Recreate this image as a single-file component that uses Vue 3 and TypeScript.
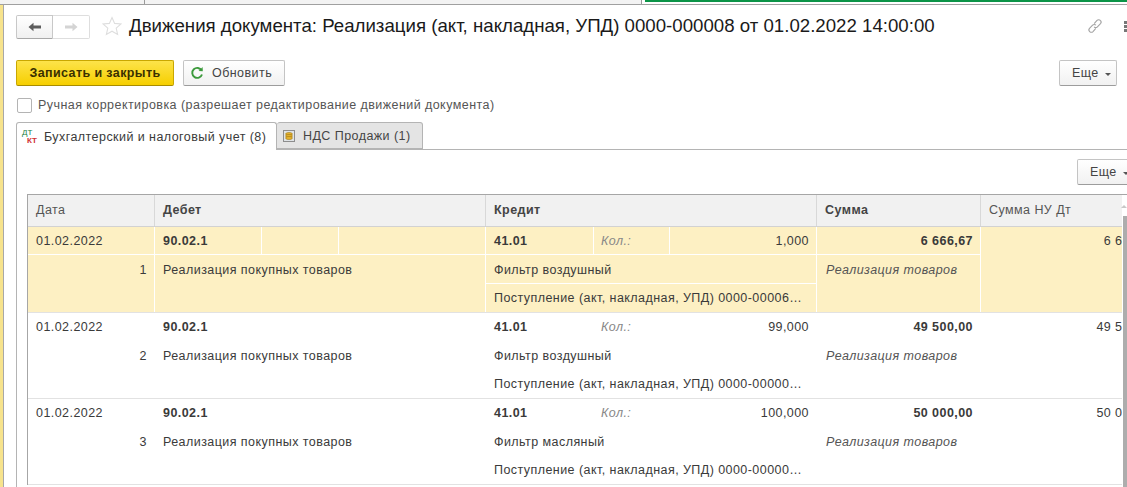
<script setup lang="ts">
interface Row { n: number; qty: string; sum: string; nu: string; item: string; doc: string; active?: boolean }
const rows: Row[] = [
  { n: 1, qty: '1,000', sum: '6 666,67', nu: '6 666,67', item: 'Фильтр воздушный', doc: 'Поступление (акт, накладная, УПД) 0000-00006…', active: true },
  { n: 2, qty: '99,000', sum: '49 500,00', nu: '49 500,00', item: 'Фильтр воздушный', doc: 'Поступление (акт, накладная, УПД) 0000-00000…' },
  { n: 3, qty: '100,000', sum: '50 000,00', nu: '50 000,00', item: 'Фильтр масляный', doc: 'Поступление (акт, накладная, УПД) 0000-00000…' },
]
</script>

<template>
  <div class="page">
    <div class="topstrip">
      <div class="tab-a"></div>
      <div class="tab-b"></div>
      <div class="tab-c"></div>
    </div>
    <div class="shell">
      <div class="side"></div>
      <main class="main">
        <header class="titlebar">
          <div class="nav">
            <button class="nav-btn back">
              <svg width="14" height="10" viewBox="0 0 14 10"><path d="M0.5 5 5.5 0.8V3.5H13V6.5H5.5V9.2Z" fill="#5c5c5c" /></svg>
            </button>
            <button class="nav-btn fwd">
              <svg width="14" height="10" viewBox="0 0 14 10"><path d="M13.5 5 8.5 0.8V3.5H1V6.5H8.5V9.2Z" fill="#d4d4d4" /></svg>
            </button>
          </div>
          <svg class="star" width="20" height="20" viewBox="0 0 20 20"><path d="M10 1.5 12.6 7.4 19 8 14.2 12.2 15.6 18.5 10 15.2 4.4 18.5 5.8 12.2 1 8 7.4 7.4Z" fill="none" stroke="#dedede" stroke-width="1.1" /></svg>
          <h1 class="title">Движения документа: Реализация (акт, накладная, УПД) 0000-000008 от 01.02.2022 14:00:00</h1>
          <svg class="link" width="16" height="16" viewBox="0 0 16 16" fill="none" stroke="#a4a4a4" stroke-width="1.1"><path d="M7.2 5.6 10 2.4a2.3 2.3 0 0 1 3.3 0 2.3 2.3 0 0 1 .2 3.2L10.4 8.8a2.3 2.3 0 0 1-3.3 0" /><path d="M8.8 10.4 6 13.6a2.3 2.3 0 0 1-3.3 0 2.3 2.3 0 0 1-.2-3.2L5.6 7.2a2.3 2.3 0 0 1 3.3 0" /></svg>
          <div class="dots"><i></i><i></i><i></i></div>
        </header>

        <div class="toolbar">
          <button class="btn primary">Записать и закрыть</button>
          <button class="btn refresh">
            <svg width="14" height="14" viewBox="0 0 14 14" fill="none"><path d="M11.6 4.4A5 5 0 1 0 12 8.5" stroke="#3c9a3c" stroke-width="1.9" /><path d="M8.6 4.9 12.8 5.3 12.6 1Z" fill="#3c9a3c" /></svg>
            Обновить
          </button>
          <button class="btn more top-more">Еще <span class="caret"></span></button>
        </div>

        <label class="check"><span class="box"></span>Ручная корректировка (разрешает редактирование движений документа)</label>

        <div class="tabs">
          <div class="tab current">
            <span class="dtkt"><b class="dt">ДТ</b><b class="kt">КТ</b></span>
            Бухгалтерский и налоговый учет (8)
          </div>
          <div class="tab other">
            <span class="coins"><svg width="12" height="12" viewBox="0 0 12 12"><rect x="0.5" y="0.5" width="11" height="11" fill="#dfe3e6" stroke="#8d8d8d" /><ellipse cx="6" cy="4" rx="3.4" ry="1.5" fill="#e8b52e" stroke="#9a7414" stroke-width=".6" /><ellipse cx="6" cy="6" rx="3.4" ry="1.5" fill="#e8b52e" stroke="#9a7414" stroke-width=".6" /><ellipse cx="6" cy="8" rx="3.4" ry="1.5" fill="#e8b52e" stroke="#9a7414" stroke-width=".6" /></svg></span>
            НДС Продажи (1)
          </div>
        </div>

        <section class="panel">
          <div class="panel-bar">
            <button class="btn more table-more">Еще <span class="caret"></span></button>
          </div>
          <div class="table">
            <div class="clip">
              <div class="thead">
                <div class="th">Дата</div>
                <div class="th strong">Дебет</div>
                <div class="th strong">Кредит</div>
                <div class="th strong">Сумма</div>
                <div class="th">Сумма НУ Дт</div>
              </div>
              <div v-for="r in rows" :key="r.n" class="row" :class="{ active: r.active }">
                <div class="col c-date">
                  <div class="line">01.02.2022</div>
                  <div class="line num">{{ r.n }}</div>
                </div>
                <div class="col c-deb">
                  <div class="line split deb-split">
                    <span class="strong">90.02.1</span><span></span><span></span>
                  </div>
                  <div class="line">Реализация покупных товаров</div>
                </div>
                <div class="col c-cred">
                  <div class="line split cred-split">
                    <span class="strong">41.01</span><span class="kol">Кол.:</span><span class="right">{{ r.qty }}</span>
                  </div>
                  <div class="line ruled">{{ r.item }}</div>
                  <div class="line ruled">{{ r.doc }}</div>
                </div>
                <div class="col c-sum">
                  <div class="line right strong">{{ r.sum }}</div>
                  <div class="line kol-sum">Реализация товаров</div>
                </div>
                <div class="col c-nu">
                  <div class="line right">{{ r.nu }}</div>
                </div>
              </div>
            </div>
          </div>
          <div class="scroll-up"></div>
          <div class="scroll"></div>
        </section>
      </main>
    </div>
  </div>
</template>

<style>
html, body { margin: 0; background: #fff; }
</style>

<style scoped>
.page {
  width: 1127px;
  height: 487px;
  overflow: hidden;
  background: #fff;
  color: #3a3a3a;
  font-family: "Liberation Sans", Arial, sans-serif;
  font-size: 12.5px;
  letter-spacing: 0.44px;
}
button { font: inherit; letter-spacing: inherit; color: inherit; }

.topstrip {
  height: 4px;
  display: flex;
  border-bottom: 1px solid #a0a0a0;
}
.tab-a { width: 144px; background: #f3f3f3; border-right: 1px solid #9a9a9a; }
.tab-b { width: 496px; background: #f3f3f3; border-right: 1px solid #9a9a9a; }
.tab-c { flex: 1; margin-left: 3px; height: 2px; background: #0b9447; }

.shell { display: flex; height: 482px; }
.side { width: 3px; background: #f7e38c; border-right: 1px solid #a8a8a8; }
.main { flex: 1; min-width: 0; padding-left: 11px; display: flex; flex-direction: column; }

.titlebar { display: flex; align-items: center; padding-top: 3px; box-sizing: border-box; height: 39px; }
.nav { display: flex; width: 74px; height: 24px; margin-left: 1px; margin-top: 1px; }
.nav-btn {
  width: 37px; padding: 0; display: flex; align-items: center; justify-content: center;
  background: #fff; border: 1px solid #dedede;
}
.nav-btn.back { background: linear-gradient(#fff, #f0f0f0); border-color: #c8c8c8; border-bottom-color: #a8a8a8; border-radius: 2px 0 0 2px; }
.nav-btn.fwd { border-left: 0; border-radius: 0 2px 2px 0; }
.star { margin-left: 12px; flex: none; }
.title {
  margin: 0 0 0 7px; font-size: 18.67px; font-weight: 400; color: #1a1a1a; letter-spacing: 0; white-space: nowrap;
}
.link { margin-left: auto; margin-right: 21px; flex: none; }
.dots { display: flex; flex-direction: column; gap: 1px; flex: none; width: 3px; }
.dots i { width: 3px; height: 3px; background: #777; display: block; }

.toolbar { display: flex; align-items: center; height: 26px; margin-top: 16px; position: relative; padding-left: 1px; }
.btn {
  height: 26px; box-sizing: border-box; padding: 0; background: linear-gradient(#fff, #f1f1f1);
  border: 1px solid #c4c4c4; border-bottom-color: #9c9c9c; border-radius: 2px;
  display: flex; align-items: center; white-space: nowrap; color: #444;
}
.primary {
  width: 158px; justify-content: center; background: linear-gradient(#fde34a, #f6cf00); border-color: #c9a700; border-bottom-color: #a88c00; color: #3a3000; font-weight: 700; letter-spacing: 0.4px;
}
.refresh { width: 102px; margin-left: 9px; gap: 8px; padding-left: 6px; }
.more { width: 58px; gap: 6px; padding-left: 12px; }
.top-more { margin-left: auto; margin-right: 10px; }
.caret { width: 0; height: 0; border: 3px solid transparent; border-top-color: #555; border-bottom: 0; margin-top: 2px; }

.check { display: flex; align-items: center; height: 16px; margin-top: 11px; padding-left: 2px; color: #555; white-space: nowrap; }
.box { width: 13px; height: 13px; border: 1px solid #b4b4b4; border-radius: 2px; margin-right: 6px; background: #fff; }

.tabs { display: flex; margin-top: 9px; height: 27px; position: relative; z-index: 1; padding-left: 1px; }
.tab { box-sizing: border-box; display: flex; align-items: center; white-space: nowrap; border: 1px solid #b4b4b4; border-radius: 3px 3px 0 0; }
.tab.current { width: 261px; height: 28px; background: #fff; border-bottom: 0; padding-left: 5px; color: #3a3a3a; }
.tab.other { width: 146px; height: 27px; background: #e4e4e4; border-left: 0; padding-left: 6px; color: #444; }
.dtkt { width: 17px; height: 16px; margin-right: 5px; position: relative; display: inline-block; font-size: 8px; letter-spacing: 0; }
.dt { position: absolute; left: 0; top: -1px; color: #178040; font-weight: 400; }
.kt { position: absolute; left: 5px; top: 7px; color: #cf3030; font-weight: 700; }
.coins { margin-right: 8px; display: flex; }

.panel { position: relative; flex: 1; margin-left: 1px; border: 1px solid #b4b4b4; border-right: 0; border-bottom: 0; padding-left: 10px; min-height: 0; overflow: hidden; }
.panel-bar { height: 44px; display: flex; align-items: flex-start; justify-content: flex-end; padding-top: 9px; box-sizing: border-box; }
.table-more { width: 58px; height: 26px; margin-right: -8px; flex: none; }

.table { border-top: 1px solid #a6a6a6; margin-right: 0; }
.clip { width: 1094px; overflow: hidden; border-left: 1px solid #a6a6a6; }
.thead, .row { display: grid; grid-template-columns: 127px 331px 331px 164px 183px; width: 1136px; }
.thead { height: 32px; box-sizing: border-box; background: #f1f1f1; border-bottom: 1px solid #d2d2d2; }
.th { display: flex; align-items: center; padding: 0 0 2px 8px; border-right: 1px solid #d8d8d8; color: #555; white-space: nowrap; }
.row { height: 86px; box-sizing: border-box; border-bottom: 1px solid #e2e2e2; }
.row.active { background: #fdf0c3; }
.col { min-width: 0; border-right: 1px solid transparent; }
.row.active .col { border-right-color: #fff; }
.line { height: 29px; box-sizing: border-box; padding: 0 7px 0 8px; display: flex; align-items: center; white-space: nowrap; overflow: hidden; }
.line:first-child { height: 28px; }
.line:nth-child(3) { height: 28px; }
.row.active .line { box-shadow: inset 0 -1px 0 #fff; }
.row.active .col .line:last-child { box-shadow: none; }
.num { justify-content: flex-end; }
.split { padding: 0; display: grid; }
.split > span { height: 100%; display: flex; align-items: center; padding: 0 8px; box-sizing: border-box; border-right: 1px solid transparent; min-width: 0; }
.split > .right { padding-right: 7px; }
.split > .kol { padding-left: 7px; }
.row.active .split > span { border-right-color: #fff; }
.split > span:last-child { border-right: 0 !important; }
.deb-split { grid-template-columns: 107px 77px 1fr; }
.cred-split { grid-template-columns: 108px 76px 1fr; }
.right { justify-content: flex-end; text-align: right; }
.strong { font-weight: 700; }
.kol { font-style: italic; color: #888; }
.kol-sum { font-style: italic; color: #555; padding-left: 9px; }
.th.strong { color: #444; }
.scroll { position: absolute; right: 0; top: 66px; width: 4px; bottom: 0; background: #adadad; }
.scroll-up { position: absolute; right: 0; top: 55px; width: 0; height: 0; border: 3px solid transparent; border-bottom-color: #c8c8c8; border-top: 0; }
</style>
